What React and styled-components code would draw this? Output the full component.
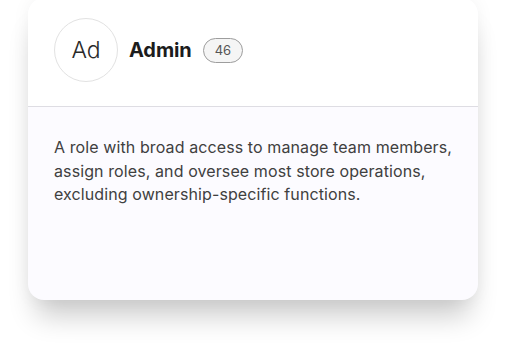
import React from 'react';
import styled, { createGlobalStyle } from 'styled-components';

const Global = createGlobalStyle`
  html, body {
    margin: 0;
    background: #ffffff;
    font-family: Inter, "Noto Sans", sans-serif;
  }
`;

const Page = styled.div`
  width: 506px;
  height: 356px;
  overflow: hidden;
  padding: 0 28px;
  box-sizing: border-box;
`;

const Card = styled.div`
  margin-top: -2px;
  width: 450px;
  height: 302px;
  border-radius: 16px;
  overflow: hidden;
  display: flex;
  flex-direction: column;
  background: #fcfbff;
  box-shadow: 0 24px 28px -8px rgba(0, 0, 0, 0.2), 0 0 18px rgba(0, 0, 0, 0.05);
`;

const Header = styled.div`
  height: 109px;
  box-sizing: border-box;
  display: flex;
  align-items: center;
  gap: 11px;
  padding: 0 26px 4px;
  background: #ffffff;
  border-bottom: 1px solid #dedde3;
`;

const Avatar = styled.div`
  width: 62px;
  height: 62px;
  border-radius: 50%;
  border: 1px solid #e2e2e2;
  display: flex;
  align-items: center;
  justify-content: center;
  font-size: 23px;
  font-weight: 300;
  color: #2a2a2a;
`;

const Name = styled.span`
  font-size: 20px;
  font-weight: 700;
  color: #1c1c1c;
  letter-spacing: -0.1px;
`;

const Count = styled.span`
  height: 23px;
  padding: 0 11px;
  border: 1px solid #9d9d9d;
  border-radius: 13px;
  background: #f5f5f5;
  display: flex;
  align-items: center;
  font-size: 13px;
  color: #555;
`;

const Body = styled.p`
  margin: 0;
  padding: 29px 10px 0 26px;
  font-size: 16px;
  line-height: 23.5px;
  letter-spacing: 0.1px;
  color: #404040;
`;

export default function App() {
  return (
    <Page>
      <Global />
      <Card>
        <Header>
          <Avatar>Ad</Avatar>
          <Name>Admin</Name>
          <Count>46</Count>
        </Header>
        <Body>
          A role with broad access to manage team members, assign roles, and oversee most store
          operations, excluding ownership-specific functions.
        </Body>
      </Card>
    </Page>
  );
}
